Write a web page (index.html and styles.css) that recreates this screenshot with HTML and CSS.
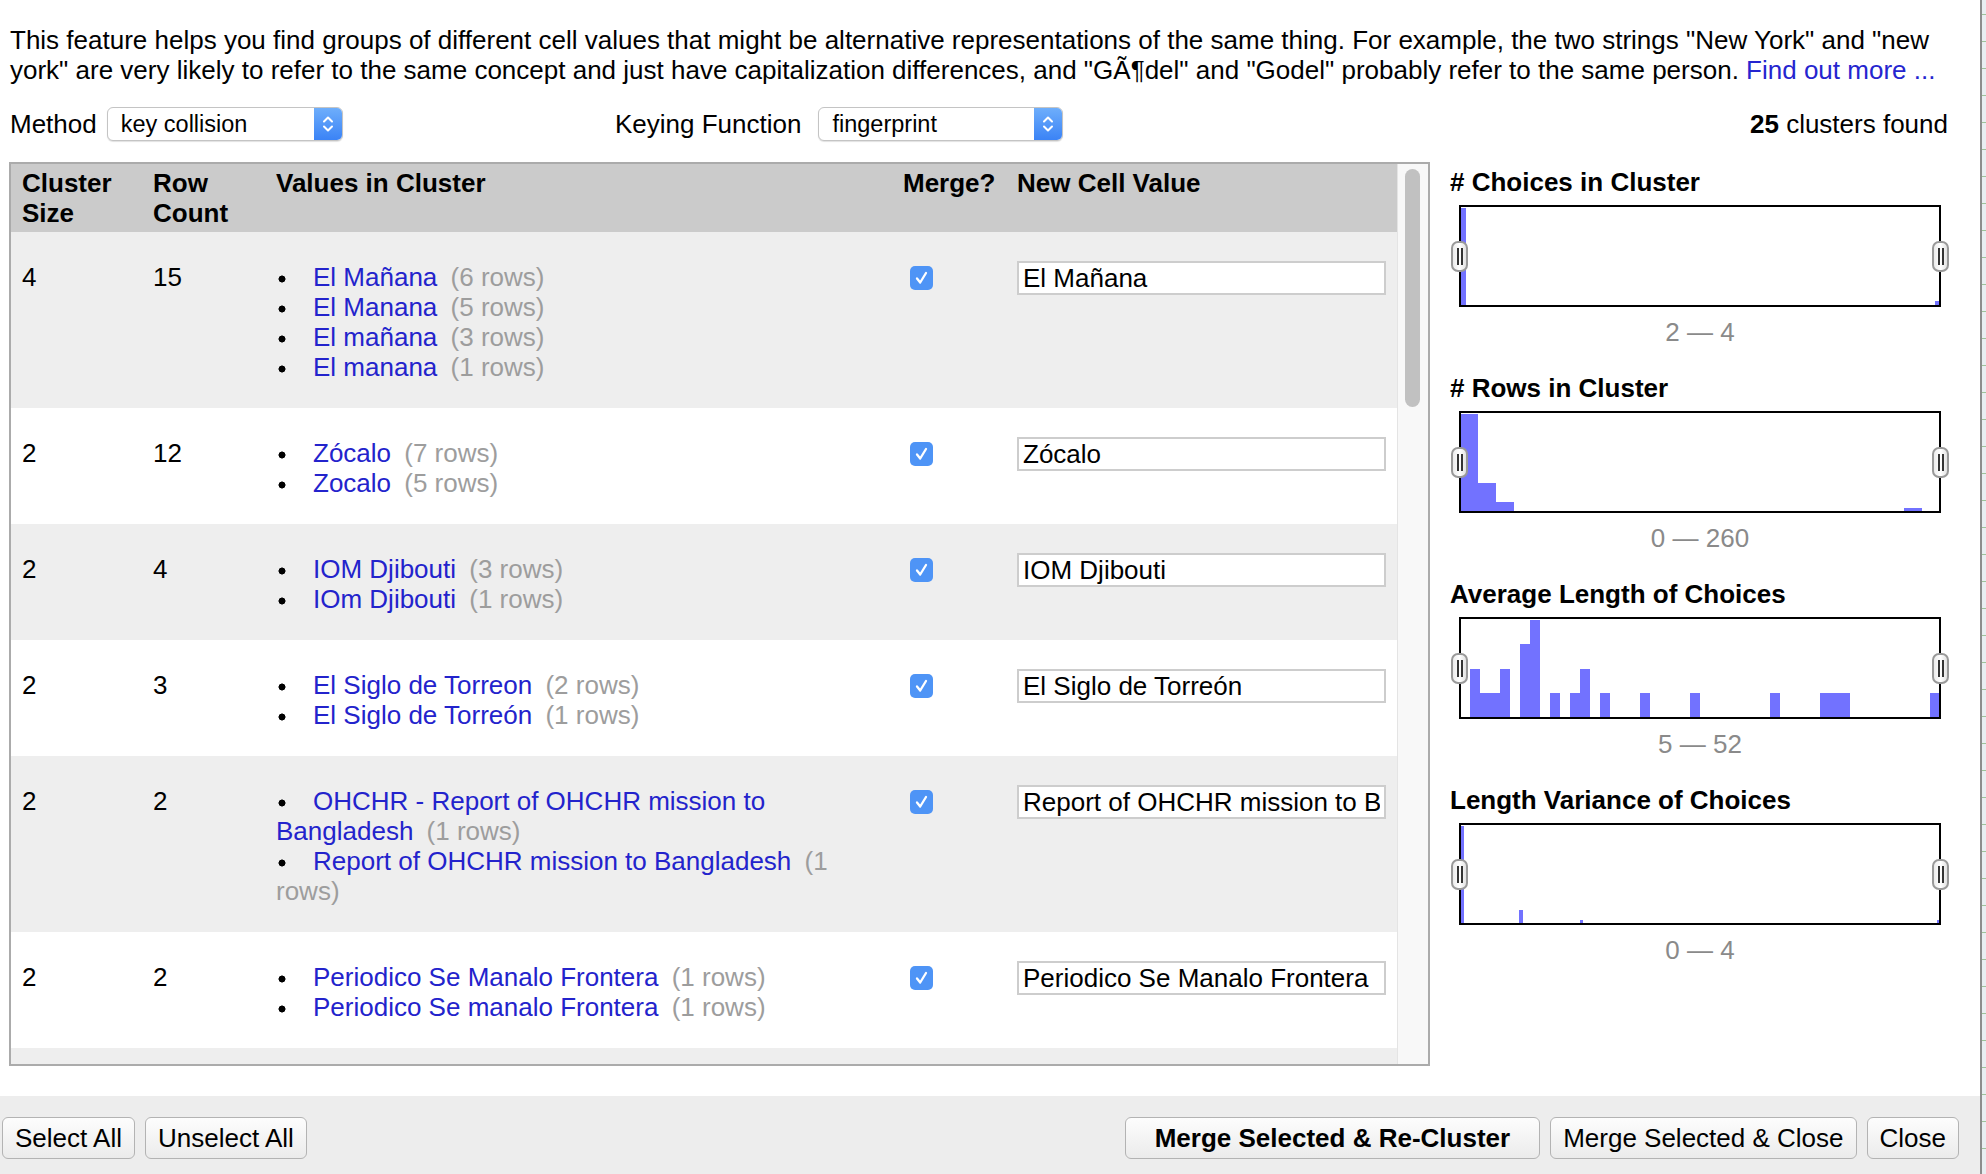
FILE: index.html
```html
<!DOCTYPE html>
<html lang="en">
<head>
<meta charset="utf-8">
<title>Cluster &amp; Edit</title>
<link rel="stylesheet" href="styles.css">
</head>
<body>
<div class="dialog">
  <div class="content">
    <p class="intro">This feature helps you find groups of different cell values that might be alternative representations of the same thing. For example, the two strings "New York" and "new york" are very likely to refer to the same concept and just have capitalization differences, and "G&Atilde;&para;del" and "Godel" probably refer to the same person. <a href="#">Find out more ...</a></p>

    <div class="controls">
      <div class="field">
        <span>Method</span>
        <div class="select sel-method">
          <span class="val">key collision</span>
          <span class="arrows"><svg width="14" height="22" viewBox="0 0 14 22"><path d="M3 8.5 L7 4.5 L11 8.5 M3 13.5 L7 17.5 L11 13.5" stroke="#fff" stroke-width="2" fill="none" stroke-linecap="round" stroke-linejoin="round"/></svg></span>
        </div>
      </div>
      <div class="field field-key">
        <span>Keying Function</span>
        <div class="select sel-key">
          <span class="val">fingerprint</span>
          <span class="arrows"><svg width="14" height="22" viewBox="0 0 14 22"><path d="M3 8.5 L7 4.5 L11 8.5 M3 13.5 L7 17.5 L11 13.5" stroke="#fff" stroke-width="2" fill="none" stroke-linecap="round" stroke-linejoin="round"/></svg></span>
        </div>
      </div>
      <div class="found"><b>25</b> clusters found</div>
    </div>

    <div class="main">
      <div class="grid-box">
        <div class="grid-scroll">
          <table class="clusters">
            <colgroup>
              <col class="c-size"><col class="c-count"><col class="c-values"><col class="c-merge"><col class="c-new">
            </colgroup>
            <thead>
              <tr><th>Cluster<br>Size</th><th>Row<br>Count</th><th>Values in Cluster</th><th>Merge?</th><th>New Cell Value</th></tr>
            </thead>
            <tbody>
              <tr class="odd">
                <td>4</td><td>15</td>
                <td><ul class="values">
                  <li><a href="#">El Mañana</a> <span class="cnt">(6 rows)</span></li>
                  <li><a href="#">El Manana</a> <span class="cnt">(5 rows)</span></li>
                  <li><a href="#">El mañana</a> <span class="cnt">(3 rows)</span></li>
                  <li><a href="#">El manana</a> <span class="cnt">(1 rows)</span></li>
                </ul></td>
                <td><span class="check"><svg width="23" height="24" viewBox="0 0 23 24"><path d="M7 12.5 L10.2 16.5 L16 7" stroke="#fff" stroke-width="2.3" fill="none" stroke-linecap="round" stroke-linejoin="round"/></svg></span></td>
                <td><input class="newval" type="text" value="El Mañana"></td>
              </tr>
              <tr>
                <td>2</td><td>12</td>
                <td><ul class="values">
                  <li><a href="#">Zócalo</a> <span class="cnt">(7 rows)</span></li>
                  <li><a href="#">Zocalo</a> <span class="cnt">(5 rows)</span></li>
                </ul></td>
                <td><span class="check"><svg width="23" height="24" viewBox="0 0 23 24"><path d="M7 12.5 L10.2 16.5 L16 7" stroke="#fff" stroke-width="2.3" fill="none" stroke-linecap="round" stroke-linejoin="round"/></svg></span></td>
                <td><input class="newval" type="text" value="Zócalo"></td>
              </tr>
              <tr class="odd">
                <td>2</td><td>4</td>
                <td><ul class="values">
                  <li><a href="#">IOM Djibouti</a> <span class="cnt">(3 rows)</span></li>
                  <li><a href="#">IOm Djibouti</a> <span class="cnt">(1 rows)</span></li>
                </ul></td>
                <td><span class="check"><svg width="23" height="24" viewBox="0 0 23 24"><path d="M7 12.5 L10.2 16.5 L16 7" stroke="#fff" stroke-width="2.3" fill="none" stroke-linecap="round" stroke-linejoin="round"/></svg></span></td>
                <td><input class="newval" type="text" value="IOM Djibouti"></td>
              </tr>
              <tr>
                <td>2</td><td>3</td>
                <td><ul class="values">
                  <li><a href="#">El Siglo de Torreon</a> <span class="cnt">(2 rows)</span></li>
                  <li><a href="#">El Siglo de Torreón</a> <span class="cnt">(1 rows)</span></li>
                </ul></td>
                <td><span class="check"><svg width="23" height="24" viewBox="0 0 23 24"><path d="M7 12.5 L10.2 16.5 L16 7" stroke="#fff" stroke-width="2.3" fill="none" stroke-linecap="round" stroke-linejoin="round"/></svg></span></td>
                <td><input class="newval" type="text" value="El Siglo de Torreón"></td>
              </tr>
              <tr class="odd">
                <td>2</td><td>2</td>
                <td><ul class="values">
                  <li><a href="#">OHCHR - Report of OHCHR mission to Bangladesh</a> <span class="cnt">(1 rows)</span></li>
                  <li><a href="#">Report of OHCHR mission to Bangladesh</a> <span class="cnt">(1 rows)</span></li>
                </ul></td>
                <td><span class="check"><svg width="23" height="24" viewBox="0 0 23 24"><path d="M7 12.5 L10.2 16.5 L16 7" stroke="#fff" stroke-width="2.3" fill="none" stroke-linecap="round" stroke-linejoin="round"/></svg></span></td>
                <td><input class="newval" type="text" value="Report of OHCHR mission to Bangladesh"></td>
              </tr>
              <tr>
                <td>2</td><td>2</td>
                <td><ul class="values">
                  <li><a href="#">Periodico Se Manalo Frontera</a> <span class="cnt">(1 rows)</span></li>
                  <li><a href="#">Periodico Se manalo Frontera</a> <span class="cnt">(1 rows)</span></li>
                </ul></td>
                <td><span class="check"><svg width="23" height="24" viewBox="0 0 23 24"><path d="M7 12.5 L10.2 16.5 L16 7" stroke="#fff" stroke-width="2.3" fill="none" stroke-linecap="round" stroke-linejoin="round"/></svg></span></td>
                <td><input class="newval" type="text" value="Periodico Se Manalo Frontera"></td>
              </tr>
              <tr class="odd tail">
                <td></td><td></td><td></td><td></td><td></td>
              </tr>
            </tbody>
          </table>
        </div>
        <div class="track"><div class="thumb"></div></div>
      </div>

      <div class="panel">
        <div class="hsec">
          <div class="htitle"># Choices in Cluster</div>
          <div class="hist">
            <svg width="478" height="98" viewBox="0 0 478 98"><g fill="#7272ff">
              <rect x="0" y="1" width="5" height="97"/>
              <rect x="474" y="94" width="4" height="4"/>
            </g></svg>
            <span class="handle h-left"></span><span class="handle h-right"></span>
          </div>
          <div class="range">2 — 4</div>
        </div>
        <div class="hsec">
          <div class="htitle"># Rows in Cluster</div>
          <div class="hist">
            <svg width="478" height="98" viewBox="0 0 478 98"><g fill="#7272ff">
              <rect x="0" y="1" width="17" height="97"/>
              <rect x="17" y="70" width="18" height="28"/>
              <rect x="35" y="89" width="18" height="9"/>
              <rect x="443" y="95" width="18" height="3"/>
            </g></svg>
            <span class="handle h-left"></span><span class="handle h-right"></span>
          </div>
          <div class="range">0 — 260</div>
        </div>
        <div class="hsec">
          <div class="htitle">Average Length of Choices</div>
          <div class="hist">
            <svg width="478" height="98" viewBox="0 0 478 98"><g fill="#7272ff">
              <rect x="9" y="50" width="10" height="48"/>
              <rect x="19" y="74" width="20" height="24"/>
              <rect x="39" y="50" width="10" height="48"/>
              <rect x="59" y="25" width="10" height="73"/>
              <rect x="69" y="1" width="10" height="97"/>
              <rect x="89" y="74" width="10" height="24"/>
              <rect x="109" y="74" width="10" height="24"/>
              <rect x="119" y="50" width="10" height="48"/>
              <rect x="139" y="74" width="10" height="24"/>
              <rect x="179" y="74" width="10" height="24"/>
              <rect x="229" y="74" width="10" height="24"/>
              <rect x="309" y="74" width="10" height="24"/>
              <rect x="359" y="74" width="30" height="24"/>
              <rect x="469" y="74" width="9" height="24"/>
            </g></svg>
            <span class="handle h-left"></span><span class="handle h-right"></span>
          </div>
          <div class="range">5 — 52</div>
        </div>
        <div class="hsec">
          <div class="htitle">Length Variance of Choices</div>
          <div class="hist">
            <svg width="478" height="98" viewBox="0 0 478 98"><g fill="#7272ff">
              <rect x="0" y="1" width="3" height="97"/>
              <rect x="58" y="85" width="4" height="13"/>
              <rect x="119" y="95" width="3" height="3"/>
              <rect x="476" y="95" width="2" height="3"/>
            </g></svg>
            <span class="handle h-left"></span><span class="handle h-right"></span>
          </div>
          <div class="range">0 — 4</div>
        </div>
      </div>
    </div>
  </div>

  <div class="footer">
    <div class="btn-group">
      <button class="btn" type="button">Select All</button>
      <button class="btn" type="button">Unselect All</button>
    </div>
    <div class="btn-group">
      <button class="btn primary" type="button">Merge Selected &amp; Re-Cluster</button>
      <button class="btn" type="button">Merge Selected &amp; Close</button>
      <button class="btn" type="button">Close</button>
    </div>
  </div>
</div>
<div class="desktop-strip"></div>
</body>
</html>
```

FILE: styles.css
```css
* { box-sizing: border-box; }

html, body {
  margin: 0;
  padding: 0;
}

body {
  width: 1986px;
  height: 1174px;
  overflow: hidden;
  position: relative;
  background: #fff;
  color: #000;
  font-family: "Liberation Sans", Arial, Helvetica, sans-serif;
  font-size: 26px;
  line-height: 30px;
}

.dialog {
  width: 1980px;
  height: 1174px;
  display: flex;
  flex-direction: column;
  background: #fff;
}

.content {
  flex: 1;
  padding: 25px 32px 0 10px;
}

.intro {
  margin: 0;
}

.intro a {
  color: #2525cf;
  text-decoration: none;
}

/* controls row */
.controls {
  display: grid;
  grid-template-columns: 605px 1fr auto;
  align-items: center;
  height: 34px;
  margin-top: 22px;
}

.field {
  display: flex;
  align-items: center;
  gap: 10px;
}

.field-key {
  gap: 17px;
}

.select {
  display: flex;
  height: 34px;
  border: 1px solid #c4c4c4;
  border-radius: 6px;
  background: #fff;
  box-shadow: 0 1px 1px rgba(0, 0, 0, 0.12);
  overflow: hidden;
  font-size: 23.5px;
}

.sel-method { width: 236px; }
.sel-key { width: 245px; }

.select .val {
  flex: 1;
  padding-left: 13px;
  line-height: 32px;
}

.select .arrows {
  width: 28px;
  display: flex;
  align-items: center;
  justify-content: center;
  background: linear-gradient(#6eaefb, #3b83f6);
}

.found {
  text-align: right;
}

/* main area */
.main {
  display: flex;
  gap: 20px;
  margin-top: 21px;
}

.grid-box {
  flex: none;
  display: flex;
  width: 1421px;
  height: 904px;
  margin-left: -1px;
  border: 2px solid #ababab;
  overflow: hidden;
}

.grid-scroll {
  flex: none;
  width: 1386px;
  overflow: hidden;
}

.clusters {
  width: 1386px;
  table-layout: fixed;
  border-collapse: collapse;
}

.c-size { width: 131px; }
.c-count { width: 123px; }
.c-values { width: 627px; }
.c-merge { width: 114px; }
.c-new { width: 391px; }

.clusters th,
.clusters td {
  padding: 30px 11px 26px;
  text-align: left;
  vertical-align: top;
}

.clusters th {
  padding: 4px 11px 4px;
  background: #cbcbcb;
  font-weight: bold;
}

.clusters tr.odd td {
  background: #eeeeee;
}

.clusters tr.tail td {
  height: 116px;
}

.values {
  list-style: none;
  margin: 0;
  padding: 0;
}

.values li::before {
  content: "";
  display: inline-block;
  width: 37px;
  height: 8px;
  vertical-align: 3px;
  background: radial-gradient(circle at 6px 4px, #000 3.2px, transparent 3.8px);
}

.values a {
  color: #2323cc;
  text-decoration: none;
}

.cnt {
  color: #9d9d9d;
  margin-left: 6px;
}

.check {
  display: block;
  width: 23px;
  height: 24px;
  margin: 4px 0 0 7px;
  border-radius: 5px;
  background: #4e94f6;
}

.check svg {
  display: block;
}

.newval {
  display: block;
  width: 369px;
  height: 34px;
  margin-top: -1px;
  padding: 0 4px;
  border: 2px solid #cdcdcd;
  background: #fff;
  font-family: inherit;
  font-size: 26px;
  color: #000;
  outline: none;
}

.track {
  flex: none;
  width: 31px;
  background: #f8f8f8;
  border-left: 1px solid #e4e4e4;
  padding-top: 5px;
}

.thumb {
  width: 15px;
  height: 238px;
  margin-left: 7px;
  border-radius: 8px;
  background: #c1c1c1;
}

/* histograms */
.panel {
  flex: none;
  width: 500px;
  padding-top: 5px;
}

.hsec + .hsec {
  margin-top: 26px;
}

.htitle {
  font-weight: bold;
}

.hist {
  position: relative;
  width: 482px;
  height: 102px;
  margin: 8px 0 0 9px;
  border: 2px solid #000;
  background: #fff;
}

.hist svg {
  display: block;
}

.handle {
  position: absolute;
  top: 34px;
  width: 17px;
  height: 31px;
  border: 2px solid #999;
  border-radius: 7px;
  background: linear-gradient(90deg, #ececec, #fff 50%, #e2e2e2);
}

.handle::before {
  content: "";
  position: absolute;
  left: 4px;
  top: 5px;
  width: 6px;
  height: 17px;
  background: linear-gradient(90deg, #333 0 2px, transparent 2px 4px, #333 4px 6px);
}

.h-left { left: -10px; }
.h-right { right: -10px; }

.range {
  width: 482px;
  margin: 10px 0 0 9px;
  text-align: center;
  color: #8a8a8a;
}

/* footer */
.footer {
  flex: none;
  height: 78px;
  display: flex;
  justify-content: space-between;
  align-items: flex-start;
  padding: 21px 21px 0 2px;
  background: #ededed;
}

.btn-group {
  display: flex;
  gap: 10px;
}

.btn {
  height: 42px;
  padding: 0 12px;
  border: 1px solid #b3b3b3;
  border-radius: 6px;
  background: linear-gradient(#fdfdfd, #ebebeb);
  color: #000;
  font-family: inherit;
  font-size: 26px;
  line-height: 30px;
}

.btn.primary {
  font-weight: bold;
  padding: 0 29px;
}

.desktop-strip {
  position: absolute;
  top: 0;
  right: 0;
  width: 6px;
  height: 1174px;
  border-left: 2px solid #8d8d8d;
  background: repeating-linear-gradient(#e9eef2 0 14px, #9fc29a 14px 15px, #e9eef2 15px 27px);
}
```
